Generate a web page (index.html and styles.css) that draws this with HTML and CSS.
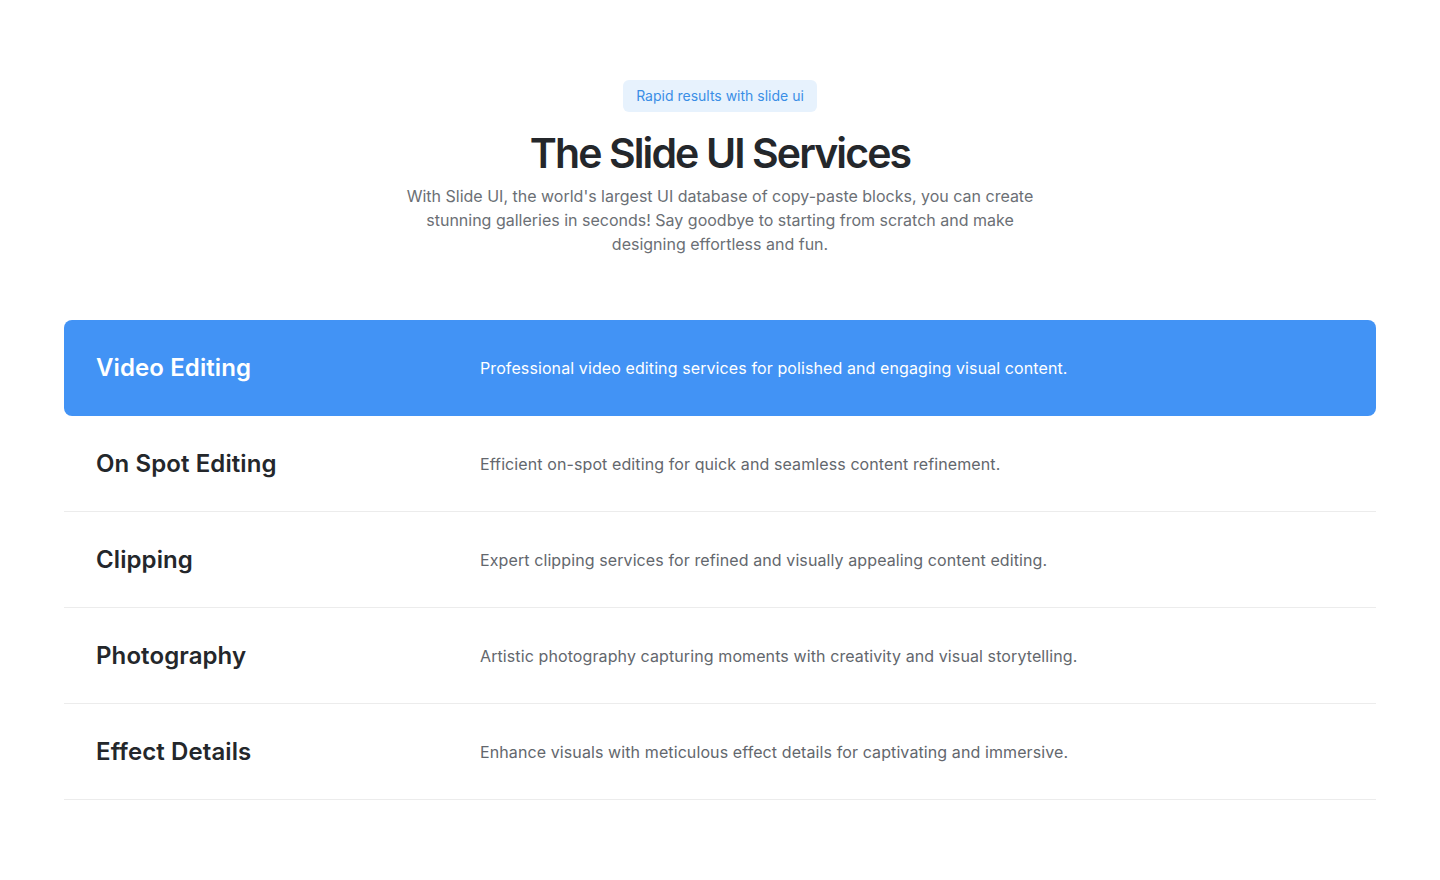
FILE: index.html
```html
<!DOCTYPE html>
<html lang="en">
<head>
<meta charset="utf-8">
<title>The Slide UI Services</title>
<link rel="stylesheet" href="styles.css">
</head>
<body>
<section class="services">
  <header class="intro">
    <span class="badge">Rapid results with slide ui</span>
    <h1 class="title">The Slide UI Services</h1>
    <p class="lead">With Slide UI, the world's largest UI database of copy-paste blocks, you can create stunning galleries in seconds! Say goodbye to starting from scratch and make designing effortless and fun.</p>
  </header>
  <ul class="list">
    <li class="row active"><h2 class="row-title">Video Editing</h2><p class="row-text">Professional video editing services for polished and engaging visual content.</p></li>
    <li class="row"><h2 class="row-title">On Spot Editing</h2><p class="row-text">Efficient on-spot editing for quick and seamless content refinement.</p></li>
    <li class="row"><h2 class="row-title">Clipping</h2><p class="row-text">Expert clipping services for refined and visually appealing content editing.</p></li>
    <li class="row"><h2 class="row-title">Photography</h2><p class="row-text">Artistic photography capturing moments with creativity and visual storytelling.</p></li>
    <li class="row"><h2 class="row-title">Effect Details</h2><p class="row-text">Enhance visuals with meticulous effect details for captivating and immersive.</p></li>
  </ul>
</section>
</body>
</html>
```
FILE: styles.css
```css
* { box-sizing: border-box; }
html, body { margin: 0; padding: 0; background: #ffffff; }
body {
  font-family: Inter, "Noto Sans", sans-serif;
  color: #1f2328;
}
.services {
  padding: 80px 64px 0;
}
.intro {
  display: flex;
  flex-direction: column;
  align-items: center;
  text-align: center;
}
.badge {
  display: inline-block;
  height: 32px;
  padding: 6px 13px;
  font-size: 14px;
  line-height: 20px;
  color: #3a8ee6;
  background: #e7f2fd;
  border-radius: 6px;
}
.title {
  margin: 17px 0 0;
  font-size: 41px;
  line-height: 48px;
  font-weight: 600;
  letter-spacing: -1.9px;
  color: #24272b;
}
.lead {
  margin: 7px 0 0;
  max-width: 640px;
  font-size: 16px;
  line-height: 24px;
  color: #6b6f75;
}
.list {
  list-style: none;
  margin: 64px 0 0;
  padding: 0;
}
.row {
  display: flex;
  align-items: center;
  height: 96px;
  padding: 1px 32px 0;
  border-bottom: 1px solid #ececec;
}
.row.active {
  background: #4293f5;
  border-radius: 8px;
  border-bottom-color: transparent;
}
.row-title {
  flex: 0 0 384px;
  margin: 0;
  font-size: 24px;
  line-height: 32px;
  font-weight: 600;
  letter-spacing: 0.1px;
  color: #24272b;
}
.row-text {
  margin: 0;
  font-size: 16px;
  line-height: 24px;
  letter-spacing: 0.1px;
  color: #63676d;
}
.row.active .row-title,
.row.active .row-text { color: #ffffff; }
```
